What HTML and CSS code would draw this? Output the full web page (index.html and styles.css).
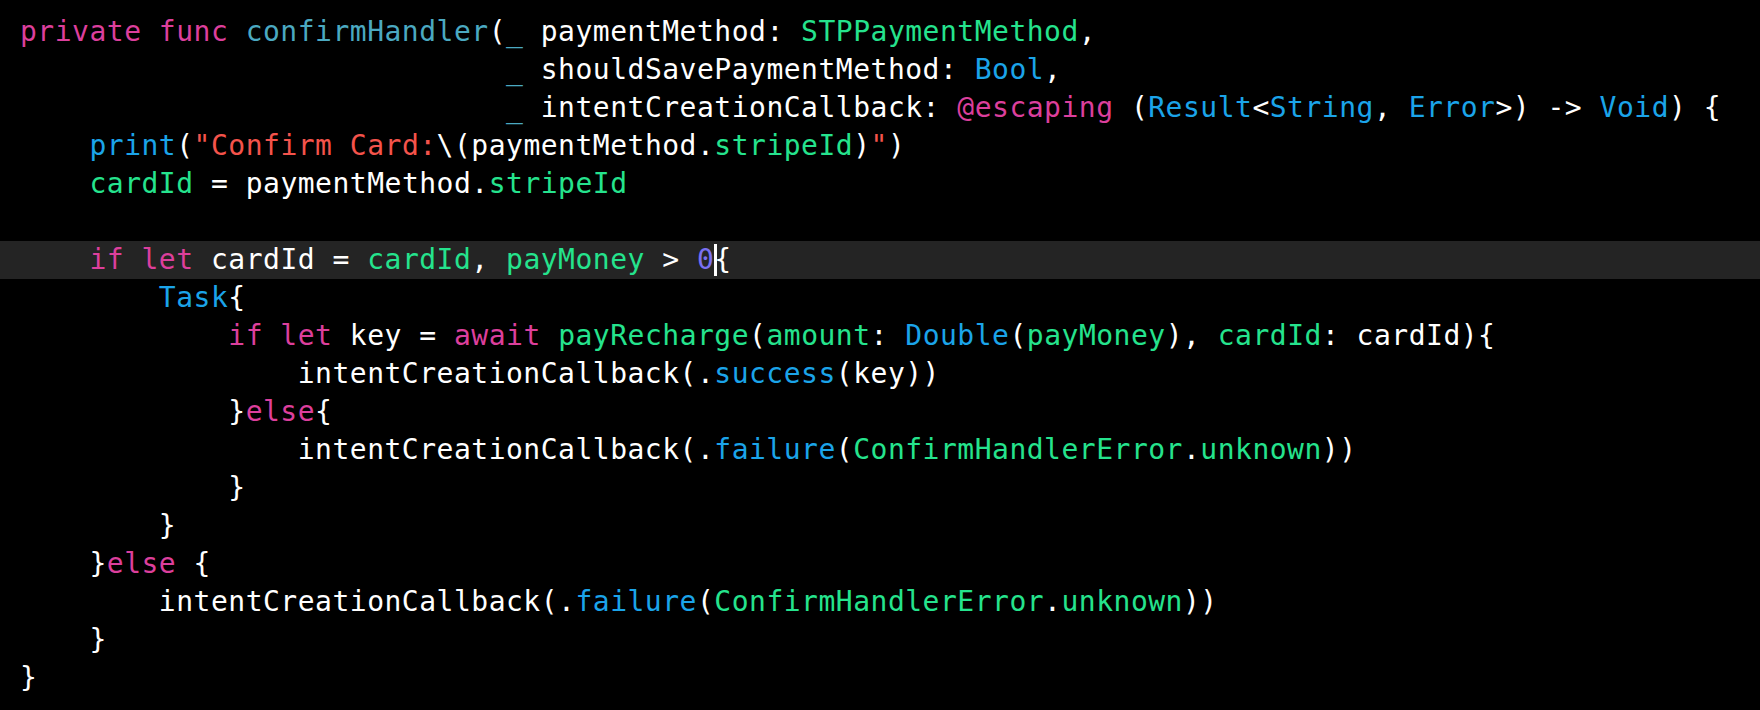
FILE: index.html
```html
<!DOCTYPE html>
<html lang="en">
<head>
    <meta charset="UTF-8">
    <title>confirmHandler</title>
    <link rel="stylesheet" href="styles.css">
</head>
<body>
    <div class="editor">
        <div class="line"><span class="kw">private func</span> <span class="decl">confirmHandler</span>(<span class="decl">_</span> paymentMethod: <span class="proj">STPPaymentMethod</span>,</div>
        <div class="line">                            <span class="decl">_</span> shouldSavePaymentMethod: <span class="type">Bool</span>,</div>
        <div class="line">                            <span class="decl">_</span> intentCreationCallback: <span class="kw">@escaping</span> (<span class="type">Result</span>&lt;<span class="type">String</span>, <span class="type">Error</span>&gt;) -&gt; <span class="type">Void</span>) {</div>
        <div class="line">    <span class="type">print</span>(<span class="str">"Confirm Card:</span>\(paymentMethod.<span class="proj">stripeId</span>)<span class="str">"</span>)</div>
        <div class="line">    <span class="proj">cardId</span> = paymentMethod.<span class="proj">stripeId</span></div>
        <div class="line"> </div>
        <div class="line current">    <span class="kw">if let</span> cardId = <span class="proj">cardId</span>, <span class="proj">payMoney</span> &gt; <span class="num">0</span><span class="caret"></span>{</div>
        <div class="line">        <span class="type">Task</span>{</div>
        <div class="line">            <span class="kw">if let</span> key = <span class="kw">await</span> <span class="proj">payRecharge</span>(<span class="proj">amount</span>: <span class="type">Double</span>(<span class="proj">payMoney</span>), <span class="proj">cardId</span>: cardId){</div>
        <div class="line">                intentCreationCallback(.<span class="type">success</span>(key))</div>
        <div class="line">            }<span class="kw">else</span>{</div>
        <div class="line">                intentCreationCallback(.<span class="type">failure</span>(<span class="proj">ConfirmHandlerError</span>.<span class="proj">unknown</span>))</div>
        <div class="line">            }</div>
        <div class="line">        }</div>
        <div class="line">    }<span class="kw">else</span> {</div>
        <div class="line">        intentCreationCallback(.<span class="type">failure</span>(<span class="proj">ConfirmHandlerError</span>.<span class="proj">unknown</span>))</div>
        <div class="line">    }</div>
        <div class="line">}</div>
    </div>
</body>
</html>
```

FILE: styles.css
```css
html, body {
    margin: 0;
    height: 100%;
    background-color: #000;
}
.editor {
    padding-top: 13px;
    font-family: "DejaVu Sans Mono", "Liberation Mono", monospace;
    font-size: 28px;
    letter-spacing: 0.5px;
    line-height: 38px;
    color: #fff;
}
.line {
    white-space: pre;
    padding-left: 20px;
    height: 38px;
}
.current {
    background-color: #242424;
}
.kw {
    color: #dc3f9c;
}
.decl {
    color: #4ba9c1;
}
.proj {
    color: #25e38d;
}
.type {
    color: #1ba4e9;
}
.str {
    color: #f4534b;
}
.num {
    color: #7a70f2;
}
.caret {
    display: inline-block;
    width: 3px;
    height: 32px;
    margin-right: -3px;
    background-color: #fff;
    vertical-align: -7px;
}
```
